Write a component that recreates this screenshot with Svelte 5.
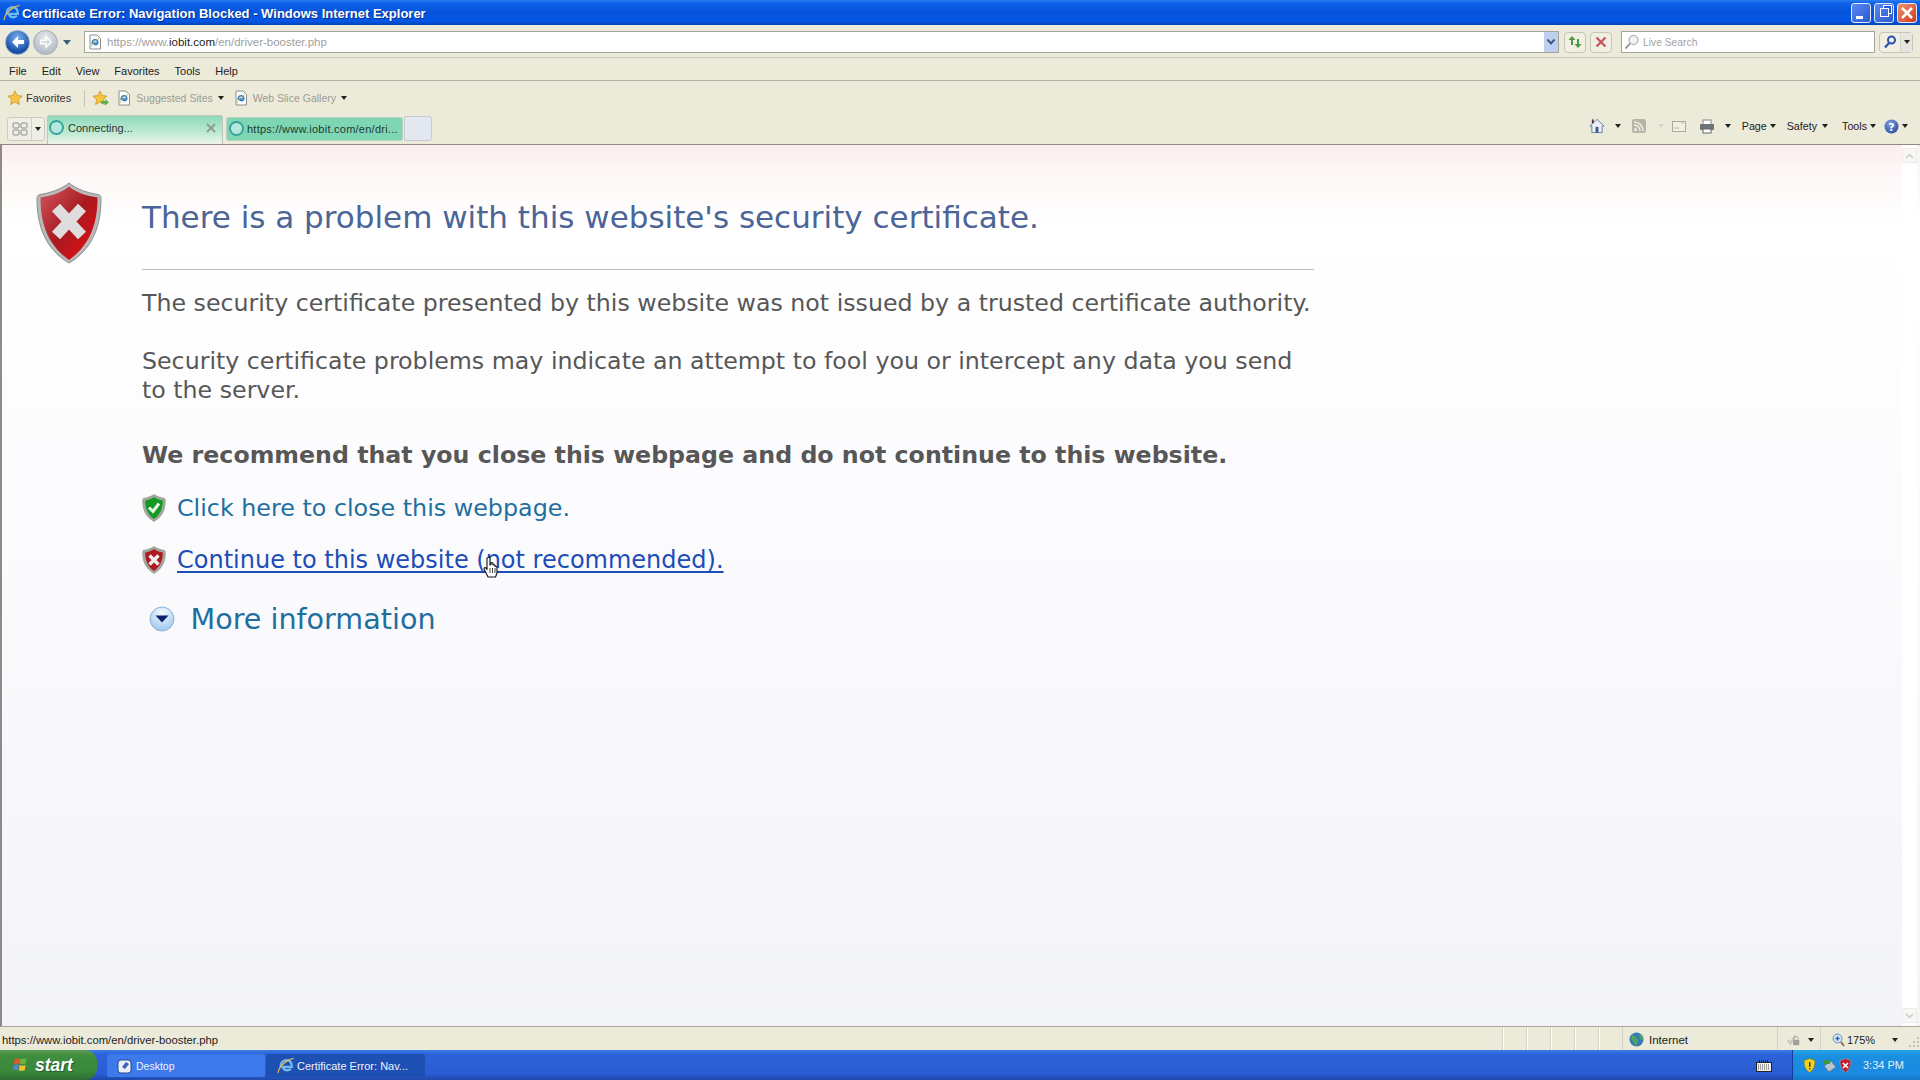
<script>
  const menus = ['File', 'Edit', 'View', 'Favorites', 'Tools', 'Help'];
</script>

<svelte:head><title>Certificate Error</title></svelte:head>

{#snippet ieLogo(size)}
  <svg class="ielogo" width={size} height={size} viewBox="0 0 20 20">
    <path d="M4 12c-.5-5 2.500-8.500 6.500-8.500S16.500 6.500 16.500 11H6.800c.2 3.800 5 4.800 8.700 2.200" fill="none" stroke="#6fb9ec" stroke-width="2.600"/>
    <path d="M1.500 18C.5 14 8 3.500 18.500 1.500" fill="none" stroke="#e3b94f" stroke-width="1.300"/>
  </svg>
{/snippet}

{#snippet pageIcon()}
  <svg class="pgicon" width="14" height="16" viewBox="0 0 14 16">
    <path d="M2 1h7l3.500 3.500V15H2z" fill="#fdfdfb" stroke="#8b8f8f"/>
    <path d="M4.200 10c-.2-2.600 1-4.200 2.800-4.200s2.800 1.300 2.800 3.200H5.600c.1 1.800 2 2.200 3.900 1.100" fill="none" stroke="#2b7fc4" stroke-width="1.500"/>
    <path d="M3 13C4 10 7 6 11 4.500" fill="none" stroke="#dcae3f" stroke-width=".8"/>
  </svg>
{/snippet}

<div class="win">
  <header class="title">
    {@render ieLogo(18)}
    <span class="ttext">Certificate Error: Navigation Blocked - Windows Internet Explorer</span>
    <div class="wbtns">
      <span class="wb"><i class="min"></i></span>
      <span class="wb"><i class="max"></i></span>
      <span class="wb close"><svg width="14" height="14" viewBox="0 0 14 14"><path d="M2 2l10 10M12 2L2 12" stroke="#fff" stroke-width="2.600"/></svg></span>
    </div>
  </header>

  <div class="addr">
    <div class="nav">
      <span class="round back"><svg width="18" height="18" viewBox="0 0 18 18"><path d="M9 3L3 9l6 6V11h6V7H9z" fill="#fff"/></svg></span>
      <span class="round fwd"><svg width="16" height="16" viewBox="0 0 18 18"><path d="M9 3l6 6-6 6V11H3V7h6z" fill="none" stroke="#fff" stroke-width="1.500"/></svg></span>
      <i class="tri nv"></i>
    </div>
    <div class="urlbox">
      {@render pageIcon()}
      <span class="url">https://www.<b>iobit.com</b>/en/driver-booster.php</span>
      <span class="drop"><svg width="10" height="8" viewBox="0 0 10 8"><path d="M1.500 1.500L5 5.500l3.500-4" fill="none" stroke="#3d5a8c" stroke-width="2"/></svg></span>
    </div>
    <span class="sq go"><svg width="16" height="14" viewBox="0 0 16 14"><path d="M5 1L1.500 5H4v5h2V5h2.500zM11 13l3.500-4H12V4h-2v5H7.500z" fill="#4a9a3f"/></svg></span>
    <span class="sq stop"><svg width="12" height="12" viewBox="0 0 12 12"><path d="M1.500 1.500l9 9M10.500 1.500l-9 9" stroke="#c4565a" stroke-width="2.200"/></svg></span>
    <div class="search">
      <svg width="15" height="16" viewBox="0 0 15 16"><circle cx="9.500" cy="6" r="4.500" fill="#f4f4f4" stroke="#9a9a9a"/><path d="M6 9.500L1.500 14.500" stroke="#8b8b8b" stroke-width="1.800"/></svg>
      <span>Live Search</span>
    </div>
    <div class="sbtn">
      <span class="sgo"><svg width="14" height="14" viewBox="0 0 14 14"><circle cx="8.500" cy="5" r="3.500" fill="none" stroke="#2a52a8" stroke-width="2"/><path d="M6 8L2 12.500" stroke="#2a52a8" stroke-width="2.200"/></svg></span>
      <span class="sdd"><i class="tri"></i></span>
    </div>
  </div>

  <nav class="menu">
    {#each menus as m}<span>{m}</span>{/each}
  </nav>

  <div class="favs">
    <svg width="16" height="16" viewBox="0 0 16 16"><path d="M8 .8l2.200 4.700 5 .6-3.700 3.500 1 5L8 12.100l-4.500 2.500 1-5L.8 6.100l5-.6z" fill="#f6c443" stroke="#c98f20" stroke-width=".7"/></svg>
    <span class="favlabel">Favorites</span>
    <i class="vsep"></i>
    <svg width="18" height="16" viewBox="0 0 18 16"><path d="M8 1l2 4.500 5 .6-3.600 3.400 1 5L8 12l-4.400 2.500 1-5L1 6.100l5-.6z" fill="#f3c53f" stroke="#c98f20" stroke-width=".7"/><path d="M9 11h4V9l4 3.500-4 3V13.500H9z" fill="#54b04a"/></svg>
    <span class="fp">{@render pageIcon()}</span>
    <span class="favdim">Suggested Sites</span><i class="tri fa"></i>
    <span class="fp2">{@render pageIcon()}</span>
    <span class="favdim">Web Slice Gallery</span><i class="tri fa"></i>
  </div>

  <div class="tabs">
    <div class="quick">
      <span class="qgrid"><svg width="16" height="14" viewBox="0 0 16 14"><g fill="none" stroke="#8c8c8c"><rect x="1" y="1" width="6" height="5" rx="1"/><rect x="9" y="1" width="6" height="5" rx="1"/><rect x="1" y="8" width="6" height="5" rx="1"/><rect x="9" y="8" width="6" height="5" rx="1"/></g></svg></span>
      <span class="qdd"><i class="tri"></i></span>
    </div>
    <div class="tab active">
      <i class="spin"></i><span class="tlabel">Connecting...</span>
      <svg class="tx" width="10" height="10" viewBox="0 0 10 10"><path d="M1 1l8 8M9 1L1 9" stroke="#8e9a94" stroke-width="1.800"/></svg>
    </div>
    <div class="tab second"><i class="spin"></i><span class="tlabel">https://www.iobit.com/en/dri...</span></div>
    <div class="newtab"></div>
    <div class="cmds">
      <svg width="16" height="16" viewBox="0 0 17 16"><path d="M1 8l7.500-7L16 8h-2v7H3V8z" fill="#e9eef4" stroke="#5f7ea0"/><rect x="7" y="9" width="3" height="6" fill="#34578a"/><rect x="3" y="1" width="2" height="4" fill="#5a2c3c"/></svg>
      <i class="tri c1"></i>
      <svg class="c2" width="14" height="14" viewBox="0 0 14 14"><rect width="14" height="14" rx="2" fill="#b7b5a3"/><circle cx="3.500" cy="10.500" r="1.500" fill="#eee"/><path d="M2 6a6 6 0 016 6M2 3a9 9 0 019 9" fill="none" stroke="#eee" stroke-width="1.500"/></svg>
      <i class="tri c3"></i>
      <svg class="c4" width="14" height="11" viewBox="0 0 14 11"><rect x=".5" y=".5" width="13" height="10" fill="#f2f0e4" stroke="#aaa99a"/><path d="M2 7h5M9 2h3" stroke="#b9b8a8"/></svg>
      <svg class="c5" width="16" height="15" viewBox="0 0 16 15"><rect x="4" y="1" width="8" height="5" fill="#fff" stroke="#888"/><rect x="1" y="5" width="14" height="6" rx="1" fill="#6d7378"/><rect x="4" y="10" width="8" height="4" fill="#fff" stroke="#666"/></svg>
      <i class="tri c6"></i>
      <span class="cmd pg">Page</span><i class="tri t1"></i>
      <span class="cmd sf">Safety</span><i class="tri t2"></i>
      <span class="cmd tl">Tools</span><i class="tri t1"></i>
      <svg class="c8" width="15" height="15" viewBox="0 0 15 15"><defs><radialGradient id="hp" cx=".4" cy=".3" r=".8"><stop offset="0" stop-color="#7f9fe0"/><stop offset="1" stop-color="#27479f"/></radialGradient></defs><circle cx="7.500" cy="7.500" r="7" fill="url(#hp)"/><text x="7.500" y="11.500" text-anchor="middle" font-size="11" font-weight="700" fill="#fff" font-family="DejaVu Sans">?</text></svg>
      <i class="tri t1"></i>
    </div>
  </div>

  <main class="page-area">
    <div class="content">
      <svg class="shield" width="68" height="82" viewBox="0 0 68 82">
        <defs>
          <linearGradient id="red" x1="0" y1="0" x2="1" y2="1"><stop offset="0" stop-color="#d0585e"/><stop offset=".5" stop-color="#a81a20"/><stop offset="1" stop-color="#ea0c12"/></linearGradient>
        </defs>
        <path d="M34 1C27 7 15 11 5 12.500 2.500 13 2 15 2 17c0 26 8 50 32 64C58 67 66 43 66 17c0-2-.5-4-3-4.500C53 11 41 7 34 1z" fill="#b9b9b9" stroke="#8d8d8d"/>
        <path d="M34 4.500C27 10.500 16 14 5.500 15.500c0 26 7 47 28.500 62.500C55.500 62.500 62.500 41.500 62.500 15.500 52 14 41 10.500 34 4.500z" fill="url(#red)"/>
        <path d="M21 25.500L47 53.500M47 25.500L21 53.500" stroke="#dedcdc" stroke-width="11"/>
      </svg>
      <div class="body">
        <h1>There is a problem with this website's security certificate.</h1>
        <hr />
        <p class="p1">The security certificate presented by this website was not issued by a trusted certificate authority.</p>
        <p class="p2">Security certificate problems may indicate an attempt to fool you or intercept any data you send to the server.</p>
        <p class="rec">We recommend that you close this webpage and do not continue to this website.</p>
        <div class="action a1">
          <svg width="24" height="28" viewBox="0 0 24 28"><path d="M12 .5C9 2.500 6 3.500 2 4.300 1 4.500.7 5 .7 6c0 9 2 16 11.300 21.500C21.300 22 23.300 15 23.300 6c0-1-.3-1.500-1.300-1.700C18 3.500 15 2.500 12 .5z" fill="#a3a89f" stroke="#8f938d" stroke-width=".6"/><path d="M12 3C9.500 4.800 6.500 5.800 3.200 6.500 3.200 14 5.500 20.500 12 25c6.500-4.500 8.800-11 8.800-18.500C17.500 5.800 14.500 4.800 12 3z" fill="#129a24"/><path d="M7 13.500l4 4 6-8" fill="none" stroke="#e8f6e8" stroke-width="3"/></svg>
          <span class="lnk">Click here to close this webpage.</span>
        </div>
        <div class="action a2">
          <svg width="24" height="28" viewBox="0 0 24 28"><path d="M12 .5C9 2.500 6 3.500 2 4.300 1 4.500.7 5 .7 6c0 9 2 16 11.300 21.500C21.300 22 23.300 15 23.300 6c0-1-.3-1.500-1.300-1.700C18 3.500 15 2.500 12 .5z" fill="#a3a89f" stroke="#8f938d" stroke-width=".6"/><path d="M12 3C9.500 4.800 6.500 5.800 3.200 6.500 3.200 14 5.500 20.500 12 25c6.500-4.500 8.800-11 8.800-18.500C17.500 5.800 14.500 4.800 12 3z" fill="#ad1a22"/><path d="M7.500 9.500l9 9M16.500 9.500l-9 9" stroke="#eee" stroke-width="3.400"/></svg>
          <span class="lnk hover">Continue to this website (not recommended).</span>
          <svg class="hand" width="16" height="22" viewBox="0 0 16 22"><path d="M5 1.500c1-1 2 0 2 1V9l1-.5V7c1-1 2 0 2 .5V9c1-1 2 0 2 .5v1c1-.5 2 0 2 1V17l-1.500 4H5L1 13c0-1 1-2 2-1l1 1.500V2.500c0-.5.500-1 1-1z" fill="#fff" stroke="#111" stroke-width="1.100" stroke-linejoin="round"/><path d="M7 12v5M9.500 12v5M12 12v5" stroke="#111" stroke-width=".8"/></svg>
        </div>
        <div class="more">
          <svg width="26" height="26" viewBox="0 0 26 26"><defs><radialGradient id="bl" cx=".5" cy=".25" r=".85"><stop offset="0" stop-color="#f6fbff"/><stop offset="1" stop-color="#8fbfec"/></radialGradient></defs><circle cx="13" cy="13" r="12" fill="url(#bl)" stroke="#8fb4d6"/><path d="M6.500 9.500h13L13 16.500z" fill="#0e1f6b"/></svg>
          <span class="lnk big">More information</span>
        </div>
      </div>
    </div>
    <aside class="scroll">
      <span class="sb"><svg width="9" height="6" viewBox="0 0 9 6"><path d="M1 5l3.500-3.500L8 5" fill="none" stroke="#ccc" stroke-width="1.500"/></svg></span>
      <span class="sb"><svg width="9" height="6" viewBox="0 0 9 6"><path d="M1 1l3.500 3.500L8 1" fill="none" stroke="#ccc" stroke-width="1.500"/></svg></span>
    </aside>
  </main>

  <footer class="status">
    <span class="stext">https://www.iobit.com/en/driver-booster.php</span>
    <div class="cells"><i></i><i></i><i></i><i></i><i></i></div>
    <div class="zone">
      <svg width="15" height="15" viewBox="0 0 15 15"><circle cx="7.500" cy="7.500" r="7" fill="#3a78b8"/><path d="M3 3c3 0 3 3 5 4s1 4-1 7C4 12 5 9 2 7zM10 1c3 2 4 5 4 7l-3-1z" fill="#4ea65a"/></svg>
      <span>Internet</span>
    </div>
    <div class="prot">
      <svg width="14" height="15" viewBox="0 0 16 15"><path d="M1 8l3 4 5-9" fill="none" stroke="#c9c9c0" stroke-width="2.500"/><rect x="7" y="8" width="7" height="6" fill="#9da09a"/><path d="M8.500 8V6a2 2 0 014 0v2" fill="none" stroke="#9da09a"/></svg>
      <i class="tri"></i>
    </div>
    <div class="zoom">
      <svg width="13" height="14" viewBox="0 0 13 14"><circle cx="5.500" cy="5.500" r="4.500" fill="#cfe3f7" stroke="#6d8fbb"/><path d="M3.500 5.500h4M5.500 3.500v4" stroke="#2e63ad" stroke-width="1.500"/><path d="M9 9l3 4" stroke="#8a7050" stroke-width="2"/></svg>
      <span>175%</span>
      <i class="tri"></i>
    </div>
    <svg class="grip" width="12" height="12" viewBox="0 0 12 12"><g fill="#c3c1b1"><rect x="9" y="9" width="2" height="2"/><rect x="5" y="9" width="2" height="2"/><rect x="1" y="9" width="2" height="2"/><rect x="9" y="5" width="2" height="2"/><rect x="5" y="5" width="2" height="2"/><rect x="9" y="1" width="2" height="2"/></g></svg>
  </footer>

  <div class="taskbar">
    <button class="start">
      <svg width="17" height="17" viewBox="0 0 20 19"><path d="M3 2c2-1 4-1 6 0L8 8C6 7 4 7 2 8z" fill="#e2562a"/><path d="M10 1c2 1 4 1 7 0l-1 6c-3 1-5 1-7 0z" fill="#6bb43c"/><path d="M2 9c2-1 4-1 6 0L7 15c-2-1-4-1-6 0z" fill="#5b84d6"/><path d="M9 9c2 1 4 1 7 0l-1 6c-3 1-5 1-7 0z" fill="#f0c030"/></svg>
      <span>start</span>
    </button>
    <div class="task desk">
      <svg width="16" height="16" viewBox="0 0 16 16"><rect x="1" y="2" width="13" height="13" rx="3" fill="#e9eef8" stroke="#2f4b92"/><path d="M5 9l4-5 3 2-4 5z" fill="#3b64b5"/></svg>
      <span>Desktop</span>
    </div>
    <div class="task ies">
      {@render ieLogo(18)}
      <span>Certificate Error: Nav...</span>
    </div>
    <div class="grow">
      <svg class="kbd" width="16" height="14" viewBox="0 0 16 14"><path d="M3 3h10" stroke="#222" stroke-dasharray="1 1" stroke-width="2"/><rect x=".5" y="4.500" width="15" height="9" fill="#eee" stroke="#222"/><path d="M2 7h12M2 9h12M2 11h12" stroke="#555" stroke-dasharray="1 1"/></svg>
    </div>
    <div class="tray">
      <svg width="13" height="15" viewBox="0 0 13 15"><path d="M6.500.5L12 2.500c0 5-1 9-5.500 12C2 11.500 1 7.500 1 2.500z" fill="#efd221" stroke="#7b6d2a" stroke-width=".6"/><rect x="6" y="4" width="1.400" height="5" fill="#333"/><rect x="6" y="10" width="1.400" height="1.400" fill="#333"/></svg>
      <svg class="t2i" width="15" height="15" viewBox="0 0 15 15"><path d="M2 8l7-5 5 6-7 5z" fill="#b8c4ce" stroke="#52606c" stroke-width=".6"/><path d="M1 2h7v4H1z" fill="#3c9c3a"/></svg>
      <svg class="t3i" width="13" height="15" viewBox="0 0 13 15"><path d="M6.500.5L12 2.500c0 5-1 9-5.500 12C2 11.500 1 7.500 1 2.500z" fill="#bf2033" stroke="#8a9aa8" stroke-width=".8"/><path d="M4 5l5 5M9 5l-5 5" stroke="#fff" stroke-width="1.600"/></svg>
      <span class="clock">3:34 PM</span>
    </div>
  </div>
</div>

<style>
  :global(body) { margin: 0; }
  :global(html), :global(body) { overflow: hidden; }
  .win {
    width: 1920px; height: 1080px; display: flex; flex-direction: column;
    font: 11px "Liberation Sans", sans-serif; background: #ecead9; overflow: hidden;
  }
  .tri { display: inline-block; width: 0; height: 0; border-left: 3px solid transparent; border-right: 3px solid transparent; border-top: 4px solid #222; flex: none; }

  .title {
    height: 25px; flex: none; display: flex; align-items: center; padding: 0 3px 0 3px; box-sizing: border-box;
    background: linear-gradient(180deg, #2a7ff0 0, #0f62e8 3px, #0553dc 12px, #0557e6 21px, #0444b6 25px);
  }
  .ttext { color: #fff; font: 700 13px "Liberation Sans", sans-serif; margin-left: 1px; margin-top: 1px; text-shadow: 1px 1px 0 #0a2f90; }
  .wbtns { margin-left: auto; display: flex; gap: 3px; }
  .wb { width: 20px; height: 20px; box-sizing: border-box; border: 1px solid #dfe9fa; border-radius: 3px; display: flex; align-items: center; justify-content: center; background: linear-gradient(135deg, #5a8af0, #2b58d2); position: relative; }
  .wb.close { background: linear-gradient(135deg, #ee9470, #d0391b); }
  .min { width: 7px; height: 3px; background: #fff; position: absolute; left: 4px; bottom: 3px; }
  .max { width: 7px; height: 7px; border: 1.500px solid #fff; box-shadow: 3px -3px 0 -1px #2b58d2, 3px -3px 0 0 #fff; }

  .addr {
    height: 33px; flex: none; box-sizing: border-box; display: flex; align-items: center; padding: 2px 7px 0 5px;
    background: #eceada; border-bottom: 1px solid #c9c8b6;
  }
  .nav { display: flex; align-items: center; width: 79px; flex: none; }
  .round { border-radius: 50%; display: flex; align-items: center; justify-content: center; flex: none; box-sizing: border-box; width: 25px; height: 25px; }
  .back { background: radial-gradient(circle at 50% 30%, #7eb3ee, #164ea6 70%); border: 1px solid #8aa7c9; }
  .fwd { background: radial-gradient(circle at 50% 30%, #e9eaee, #b4bcc8 75%); border: 1px solid #a7aeb7; margin-left: 3px; }
  .nv { margin-left: 5px; border-left-width: 4px; border-right-width: 4px; border-top: 5px solid #3e5f7e; }
  .urlbox { width: 1475px; height: 22px; flex: none; box-sizing: border-box; border: 1px solid #a4a59a; background: #fff; display: flex; align-items: center; padding-left: 3px; }
  .url { margin-left: 5px; color: #a0a0a0; font-size: 11.500px; white-space: nowrap; }
  .url b { color: #222; font-weight: 400; }
  .drop { margin-left: auto; width: 14px; height: 20px; background: #bed0ee; display: flex; align-items: center; justify-content: center; }
  .sq { width: 22px; height: 21px; box-sizing: border-box; border: 1px solid #c7c6b4; border-radius: 4px; background: #f1efe3; display: flex; align-items: center; justify-content: center; flex: none; }
  .go { margin-left: 5px; }
  .stop { margin-left: 4px; }
  .search { width: 254px; height: 22px; box-sizing: border-box; border: 1px solid #a4a59a; background: #fff; margin-left: 9px; display: flex; align-items: center; padding-left: 2px; gap: 4px; color: #a4a4a4; font-size: 10.300px; flex: none; }
  .sbtn { display: flex; margin-left: 4px; width: 34px; height: 21px; box-sizing: border-box; flex: none; border: 1px solid #c7c6b4; border-radius: 4px; background: #f1efe3; }
  .sgo { width: 20px; display: flex; align-items: center; justify-content: center; }
  .sdd { flex: 1; display: flex; align-items: center; justify-content: center; border-left: 1px solid #d5d4c5; background: #e6e6e0; }

  .menu { height: 23px; flex: none; box-sizing: border-box; display: flex; align-items: center; padding: 3px 0 0 9px; gap: 15px; color: #222; background: #ecead9; border-bottom: 1px solid #b1b0a0; }
  .favs { height: 34px; flex: none; display: flex; align-items: center; padding-left: 7px; box-sizing: border-box; background: #ecead9; }
  .favlabel { margin-left: 3px; color: #333; }
  .vsep { width: 1px; height: 17px; background: #c6c5b4; margin: 0 7px 0 13px; }
  .fp { margin-left: 7px; display: flex; }
  .fp2 { margin-left: 10px; display: flex; }
  .favdim { color: #9c9c92; margin-left: 5px; font-size: 10.500px; }
  .fa { margin-left: 5px; }

  .tabs { height: 30px; flex: none; display: flex; align-items: flex-end; padding-left: 7px; box-sizing: border-box; background: #ecead9; position: relative; border-bottom: 1px solid #8f8a83; }
  .quick { width: 38px; height: 24px; display: flex; box-sizing: border-box; border: 1px solid #c9cbc5; background: #f0efe6; margin-bottom: 3px; border-radius: 3px; }
  .qgrid { width: 23px; display: flex; align-items: center; justify-content: center; border-right: 1px solid #cfd0c8; }
  .qdd { flex: 1; display: flex; align-items: center; justify-content: center; }
  .tab { display: flex; align-items: center; box-sizing: border-box; border-radius: 3px 3px 0 0; position: relative; color: #333; }
  .tab.active { width: 176px; height: 29px; margin-left: 2px; background: linear-gradient(180deg, #8fd9b9 0, #b9e9d2 55%, #eef5e8 100%); border: 1px solid #bfc5b8; border-bottom: none; padding: 0 0 5px 1px; }
  .tab.second { width: 177px; height: 24px; background: #7fd6b3; margin: 0 0 3px 3px; padding: 0 0 1px 2px; color: #1d3a34; border: 1px solid #b8cfc4; border-radius: 3px; }
  .spin { width: 15px; height: 15px; border-radius: 50%; border: 2px solid #37a59a; background: #b7e8df; flex: none; box-sizing: border-box; }
  .tlabel { margin-left: 3px; white-space: nowrap; }
  .second .tlabel { letter-spacing: .25px; }
  .active .tlabel { margin-left: 4px; }
  .tx { position: absolute; right: 6px; top: 7px; }
  .newtab { width: 28px; height: 25px; margin: 0 0 3px 1px; box-sizing: border-box; background: #e3e8f0; border: 1px solid #c7cace; border-radius: 0 3px 3px 0; }
  .cmds { margin-left: auto; align-self: center; margin-top: -7px; display: flex; align-items: center; padding-right: 12px; color: #222; font-size: 10.700px; }
  .c1 { margin-left: 10px; }
  .c2 { margin-left: 11px; }
  .c3 { border-top-color: #d8d6c8; margin-left: 12px; }
  .c4 { margin-left: 8px; }
  .c5 { margin-left: 13px; }
  .c6 { margin-left: 10px; }
  .cmd { white-space: nowrap; }
  .pg { margin-left: 11px; }
  .sf { margin-left: 11px; }
  .tl { margin-left: 14px; }
  .t1 { margin-left: 3px; }
  .t2 { margin-left: 5px; }
  .c8 { margin-left: 8px; }

  .page-area { flex: 1; min-height: 0; display: flex; box-sizing: border-box; border-left: 2px solid #8c8c86; border-bottom: 1px solid #a9a89a; padding-right: 3px;
    background: linear-gradient(180deg, #fdeeee 0, #fef7f7 30px, #ffffff 80px, #fbfbfe 400px, #f3f4f8 100%); }
  .content { flex: 1; display: flex; padding: 44px 0 0 33px; min-width: 0; }
  .shield { flex: none; margin-top: -7px; }
  .body { width: 1172px; margin-left: 39px; color: #575757; flex: none; }
  h1 { margin: 0; padding-top: 9px; font: 400 31px/38px "DejaVu Sans", sans-serif; color: #4b6596; white-space: nowrap; }
  hr { border: none; border-top: 1px solid #bdbdbd; margin: 33px 0 0; }
  p { margin: 0; font: 400 23.700px/29px "DejaVu Sans", sans-serif; }
  .p1 { margin-top: 19px; white-space: nowrap; }
  .p2 { margin-top: 29px; }
  .rec { margin-top: 36px; font-weight: 700; white-space: nowrap; }
  .action { display: flex; align-items: center; height: 28px; position: relative; }
  .action svg { flex: none; }
  .a1 { margin-top: 24px; }
  .a2 { margin-top: 24px; }
  .lnk { font-family: "DejaVu Sans", sans-serif; color: #1f6f9e; font-size: 23.800px; margin-left: 11px; white-space: nowrap; }
  .hover { color: #1c4cb8; font-size: 24px; text-decoration: underline; text-decoration-thickness: 2px; text-underline-offset: 3px; }
  .hand { position: absolute; left: 341px; top: 10px; }
  .more { display: flex; align-items: center; margin: 28px 0 0 7px; }
  .big { font-size: 28.600px; margin-left: 15.500px; }

  .scroll { width: 15px; flex: none; display: flex; flex-direction: column; justify-content: space-between; align-items: center; padding: 3px 0; background: #fff; }
  .sb { width: 15px; height: 15px; display: flex; align-items: center; justify-content: center; background: #f7f7f4; border: 1px solid #ececea; box-sizing: border-box; }

  .status { height: 23px; flex: none; display: flex; align-items: center; box-sizing: border-box; background: #ecead9; font-size: 11.300px; color: #222; padding: 0 0 0 2px; position: relative; }
  .stext { white-space: nowrap; margin-top: 3px; }
  .cells { margin-left: auto; display: flex; height: 100%; }
  .cells i { width: 24px; box-sizing: border-box; border-left: 1px solid #d4d3c4; box-shadow: inset 1px 0 0 #fff; }
  .zone { width: 155px; display: flex; align-items: center; gap: 5px; height: 100%; padding: 2px 0 0 6px; box-sizing: border-box; border-left: 1px solid #d4d3c4; font-size: 11.500px; }
  .prot { width: 43px; display: flex; align-items: center; gap: 7px; height: 100%; padding: 2px 0 0 9px; box-sizing: border-box; border-left: 1px solid #d4d3c4; }
  .zoom { width: 100px; display: flex; align-items: center; height: 100%; padding: 2px 0 0 11px; box-sizing: border-box; border-left: 1px solid #d4d3c4; gap: 2px; font-size: 11px; }
  .zoom .tri { margin-left: 15px; }
  .grip { position: absolute; right: 0; bottom: 2px; }

  .taskbar { height: 30px; flex: none; display: flex; align-items: stretch; background: linear-gradient(180deg, #3a7de6 0, #2d63d8 4px, #2a5cd2 24px, #1e49ac 30px); color: #eef2fb; font: 11px "Liberation Sans", sans-serif; }
  .start { width: 97px; border: none; padding: 0 0 0 12px; display: flex; align-items: center; gap: 6px; border-radius: 0 12px 12px 0; background: linear-gradient(180deg, #5d9c52 0, #3f8d3f 20%, #3a893c 70%, #2f6d31 100%); color: #fff; font: italic 700 17.500px "Liberation Sans", sans-serif; text-shadow: 1px 1px 1px #24562a; }
  .task { display: flex; align-items: center; height: 23px; margin-top: 4px; box-sizing: border-box; border-radius: 2px; white-space: nowrap; }
  .desk { width: 158px; margin-left: 10px; padding-left: 10px; gap: 3px; background: #3c79ea; font-size: 10.500px; }
  .ies { width: 159px; margin-left: 1px; padding-left: 11px; gap: 2px; background: #1e4fb3; }
  .grow { flex: 1; display: flex; align-items: center; justify-content: flex-end; padding-right: 20px; }
  .tray { width: 128px; flex: none; box-sizing: border-box; display: flex; align-items: center; padding-left: 10px; background: linear-gradient(180deg, #23a4e8 0, #1a8fe0 20%, #1a8ae0 80%, #1576c8 100%); border-left: 1px solid #123f9a; }
  .t2i { margin-left: 6px; }
  .t3i { margin-left: 2px; }
  .clock { margin-left: 11px; color: #e4f0fb; }
</style>
